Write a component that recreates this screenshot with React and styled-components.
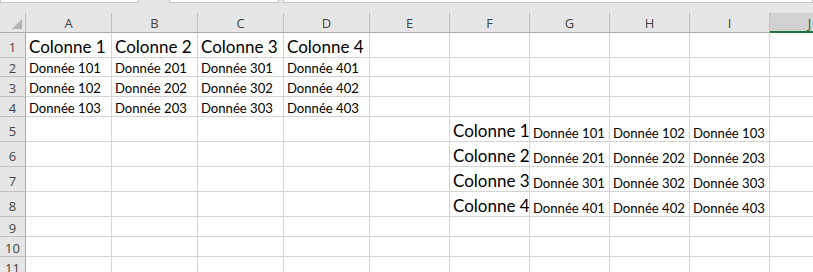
import React from "react";
import styled, { createGlobalStyle } from "styled-components";

const GlobalStyle = createGlobalStyle`
  html, body { margin: 0; padding: 0; background: #e6e6e6; overflow: hidden; }
  body { font-family: "Lato", "Liberation Sans", sans-serif; }
`;

const COLS = [26, 86, 86, 86, 86, 80, 80, 80, 80, 80, 80];
const ROWS = [20, 25, 19, 20, 20, 25, 25, 25, 25, 20, 20, 20];
const LETTERS = ["A", "B", "C", "D", "E", "F", "G", "H", "I", "J"];

const Page = styled.div`
  width: 813px;
  height: 272px;
  overflow: hidden;
  background: #e6e6e6;
`;

const TopStrip = styled.div`
  display: flex;
  height: 13px;
  align-items: flex-start;
`;

const BarBox = styled.div`
  box-sizing: border-box;
  height: 3px;
  width: ${(p) => p.$w}px;
  flex: ${(p) => (p.$grow ? "1" : "none")};
  margin-left: ${(p) => p.$ml || 0}px;
  background: #ffffff;
  border: 1px solid #c6c6c6;
  border-top: none;
`;

const Sheet = styled.div`
  display: grid;
  grid-template-columns: ${COLS.map((c) => c + "px").join(" ")};
  grid-template-rows: ${ROWS.map((r) => r + "px").join(" ")};
  width: 813px;
`;

const Corner = styled.div`
  position: relative;
  box-sizing: border-box;
  background: #e6e6e6;
  border-right: 1px solid #c0c0c0;
  border-bottom: 1px solid #ababab;
  svg { position: absolute; right: 3px; bottom: 3px; }
`;

const ColHead = styled.div`
  box-sizing: border-box;
  background: ${(p) => (p.$sel ? "#d2d2d2" : "#e6e6e6")};
  border-right: 1px solid #c0c0c0;
  border-bottom: ${(p) => (p.$sel ? "2px solid #217346" : "1px solid #ababab")};
  display: flex;
  align-items: center;
  justify-content: center;
  font-family: "Open Sans", "Liberation Sans", sans-serif;
  font-size: 13px;
  color: ${(p) => (p.$sel ? "#1e5a38" : "#444444")};
  padding-top: 1px;
`;

const RowHead = styled.div`
  box-sizing: border-box;
  background: #e6e6e6;
  border-right: 1px solid #ababab;
  border-bottom: 1px solid #c0c0c0;
  display: flex;
  align-items: flex-end;
  justify-content: center;
  font-family: "Open Sans", "Liberation Sans", sans-serif;
  font-size: 13px;
  line-height: 15px;
  color: #444444;
  padding-bottom: ${(p) => (p.$tall ? 2 : 0)}px;
`;

const Cell = styled.div`
  box-sizing: border-box;
  background: #ffffff;
  border-right: 1px solid #d4d4d4;
  border-bottom: 1px solid #d4d4d4;
  display: flex;
  align-items: flex-end;
  padding-left: 3px;
  padding-bottom: 0;
  overflow: hidden;
  white-space: nowrap;
  font-family: "Lato", "Liberation Sans", sans-serif;
  font-size: ${(p) => (p.$big ? "17px" : "13.1px")};
  line-height: ${(p) => (p.$big ? "21px" : "15px")};
  color: #000000;
`;

function cellValue(r, c) {
  if (r === 1 && c < 4) return { text: `Colonne ${c + 1}`, big: true };
  if (r >= 2 && r <= 4 && c < 4) return { text: `Donnée ${c + 1}0${r - 1}` };
  if (r >= 5 && r <= 8) {
    const n = r - 4;
    if (c === 5) return { text: `Colonne ${n}`, big: true };
    if (c >= 6 && c <= 8) return { text: `Donnée ${n}0${c - 5}` };
  }
  return { text: "" };
}

export default function App() {
  const rows = [];
  for (let r = 1; r <= 11; r++) {
    const tall = r === 1 || (r >= 5 && r <= 8);
    rows.push(
      <RowHead key={`rh${r}`} $tall={tall}>
        {r}
      </RowHead>
    );
    for (let c = 0; c < 10; c++) {
      const v = cellValue(r, c);
      rows.push(
        <Cell key={`c${r}-${c}`} $big={v.big}>
          {v.text}
        </Cell>
      );
    }
  }
  return (
    <Page>
      <GlobalStyle />
      <TopStrip>
        <BarBox $w={139} />
        <BarBox $w={110} $ml={30} />
        <BarBox $grow $ml={4} />
      </TopStrip>
      <Sheet>
        <Corner>
          <svg width="10" height="10" viewBox="0 0 10 10">
            <polygon points="10,0 10,10 0,10" fill="#b4b4b4" />
          </svg>
        </Corner>
        {LETTERS.map((l) => (
          <ColHead key={l} $sel={l === "J"}>
            {l}
          </ColHead>
        ))}
        {rows}
      </Sheet>
    </Page>
  );
}
